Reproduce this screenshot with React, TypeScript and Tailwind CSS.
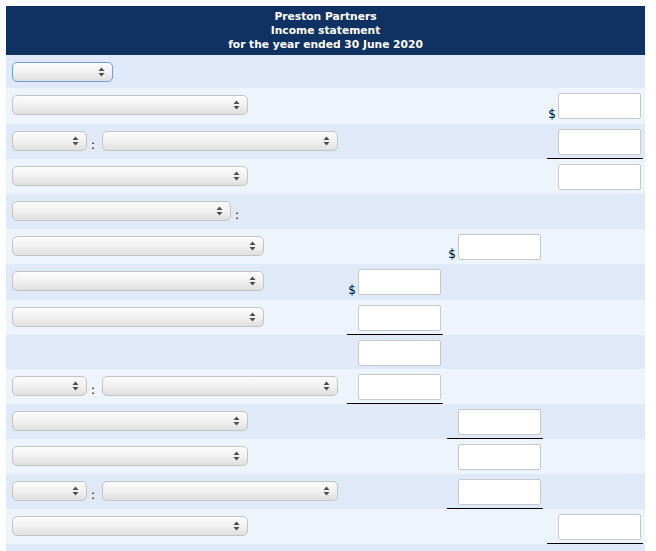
import React from "react";

type Amount = { dollar?: boolean; underline?: boolean };
type Row = {
  label: "focus" | "wide" | "pair" | "colon" | "long" | "none";
  h: string;
  a?: Amount;
  b?: Amount;
  c?: Amount;
};

const rows: Row[] = [
  { label: "focus", h: "h-[33px]" },
  { label: "wide", h: "h-[36px]", c: { dollar: true } },
  { label: "pair", h: "h-[35px]", c: { underline: true } },
  { label: "wide", h: "h-[35px]", c: {} },
  { label: "colon", h: "h-[35px]" },
  { label: "long", h: "h-[35px]", b: { dollar: true } },
  { label: "long", h: "h-[36px]", a: { dollar: true } },
  { label: "long", h: "h-[35px]", a: { underline: true } },
  { label: "none", h: "h-[34px]", a: {} },
  { label: "pair", h: "h-[35px]", a: { underline: true } },
  { label: "wide", h: "h-[35px]", b: { underline: true } },
  { label: "wide", h: "h-[35px]", b: {} },
  { label: "pair", h: "h-[35px]", b: { underline: true } },
  { label: "wide", h: "h-[35px]", c: { underline: true } },
  { label: "none", h: "h-[35px]" },
];

function Arrows() {
  return (
    <svg width="7" height="10" viewBox="0 0 7 10">
      <polygon points="3.5,0.5 6.5,4 0.5,4" fill="#4d4d4d" />
      <polygon points="0.5,6 6.5,6 3.5,9.5" fill="#4d4d4d" />
    </svg>
  );
}

function Select({ width, focus }: { width: string; focus?: boolean }) {
  return (
    <div
      className={`${width} h-[20px] shrink-0 rounded-[5px] border bg-linear-to-b from-[#fcfcfc] via-[#f1f1f1] to-[#dfdfdf] flex items-center justify-end pr-[7px] ${
        focus ? "border-[#6f9fd6]" : "border-[#c3c3c3]"
      }`}
    >
      <Arrows />
    </div>
  );
}

function Colon() {
  return (
    <span className="h-[20px] flex items-end pl-[4px]">
      <span className="text-[12px] leading-[12px] text-black">:</span>
    </span>
  );
}

function Label({ kind }: { kind: Row["label"] }) {
  if (kind === "none") return null;
  if (kind === "focus") return <Select width="w-[101px]" focus />;
  if (kind === "wide") return <Select width="w-[236px]" />;
  if (kind === "long") return <Select width="w-[252px]" />;
  if (kind === "colon")
    return (
      <>
        <Select width="w-[219px]" />
        <Colon />
      </>
    );
  return (
    <>
      <Select width="w-[75px]" />
      <span className="w-[15px] flex">
        <Colon />
      </span>
      <Select width="w-[236px]" />
    </>
  );
}

function AmountCell({ amt }: { amt?: Amount }) {
  return (
    <div className="w-[100px] shrink-0 flex flex-col">
      <div className="flex-1 flex items-start justify-end pt-[5px] pr-[4px]">
        {amt && (
          <>
            {amt.dollar && (
              <span className="self-end mb-[2px] mr-[2px] text-[12px] leading-[14px] text-black">$</span>
            )}
            <div className="w-[83px] h-[26px] bg-white border border-[#c8c8c8] rounded-[2px]" />
          </>
        )}
      </div>
      <div className={`h-px mx-[2px] ${amt?.underline ? "bg-black" : "bg-transparent"}`} />
    </div>
  );
}

export default function App() {
  return (
    <div className="bg-white min-h-screen pt-[6px] pl-[6px]" style={{ fontFamily: '"DejaVu Sans", Verdana, sans-serif' }}>
      <div className="w-[639px]">
        <div className="h-[49px] bg-[#0f3262] text-white font-bold text-[10.7px] leading-[14px] text-center flex flex-col justify-center">
          <div>Preston Partners</div>
          <div>Income statement</div>
          <div>for the year ended 30 June 2020</div>
        </div>
        {rows.map((r, i) => (
          <div
            key={i}
            className={`${r.h} flex ${i % 2 === 0 ? "bg-[#dfe9f7]" : "bg-[#eef4fc]"}`}
          >
            <div className="w-[339px] shrink-0 flex items-start pl-[6px] pt-[7px]">
              <Label kind={r.label} />
            </div>
            <AmountCell amt={r.a} />
            <AmountCell amt={r.b} />
            <AmountCell amt={r.c} />
          </div>
        ))}
      </div>
    </div>
  );
}
